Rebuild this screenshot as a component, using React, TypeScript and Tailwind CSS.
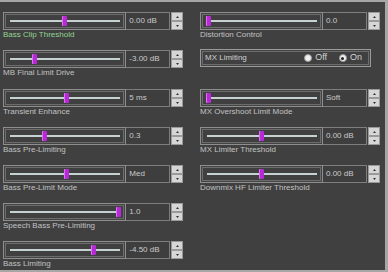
import React from 'react';

type SliderRow = { label: string; value: string; thumb: number; green?: boolean };

const left: SliderRow[] = [
  { label: 'Bass Clip Threshold', value: '0.00 dB', thumb: 58, green: true },
  { label: 'MB Final Limit Drive', value: '-3.00 dB', thumb: 28 },
  { label: 'Transient Enhance', value: '5 ms', thumb: 60 },
  { label: 'Bass Pre-Limiting', value: '0.3', thumb: 38 },
  { label: 'Bass Pre-Limit Mode', value: 'Med', thumb: 60 },
  { label: 'Speech Bass Pre-Limiting', value: '1.0', thumb: 112 },
  { label: 'Bass Limiting', value: '-4.50 dB', thumb: 87 },
];

const heights = ['h-[38px]', 'h-[39px]', 'h-[38px]', 'h-[38px]', 'h-[38px]', 'h-[38px]', 'h-[38px]'];

function Spin() {
  return (
    <div className="ml-[1px] flex h-[18px] w-[12px] flex-col">
      {[0, 1].map((i) => (
        <div
          key={i}
          className="flex h-[9px] items-center justify-center border border-[#9a9a9a] bg-[#d6d6d6]"
        >
          <svg width="3" height="2" viewBox="0 0 3 2">
            <path d={i === 0 ? 'M0 2 L1.5 0 L3 2 Z' : 'M0 0 L1.5 2 L3 0 Z'} fill="#333" />
          </svg>
        </div>
      ))}
    </div>
  );
}

function Control({ row, sliderW }: { row: SliderRow; sliderW: string }) {
  return (
    <div className="flex h-[18px]">
      <div
        className={`relative ${sliderW} h-[18px] border border-[#8e8e8e] shadow-[inset_0_0_0_1px_#454545,inset_0_0_0_2px_#6c6c6c]`}
      >
        <div className="absolute left-[6px] right-[5px] top-[7px] h-[2px] bg-[#c6d2d2]" />
        <div
          className="absolute top-[3px] h-[10px] w-[5px] rounded-[1px] bg-[#b82ad8] shadow-[inset_1px_0_0_#e070f0]"
          style={{ left: row.thumb }}
        />
      </div>
      <div className="flex h-[18px] w-[44px] items-center border border-l-0 border-[#7e7e7e] bg-[#3e3e3e] pl-[3px] text-[8px] text-[#cacaca]">
        {row.value}
      </div>
      <Spin />
    </div>
  );
}

function Row({ row, h, sliderW }: { row: SliderRow; h: string; sliderW: string }) {
  return (
    <div className={`${h} flex flex-col`}>
      <Control row={row} sliderW={sliderW} />
      <div
        className={`h-[10px] text-[8px] leading-[10px] ${row.green ? 'text-[#93d493]' : 'text-[#c2c2c2]'}`}
      >
        {row.label}
      </div>
    </div>
  );
}

function Radio({ checked, label }: { checked?: boolean; label: string }) {
  return (
    <div className="flex items-center gap-[3px]">
      <div className="flex h-[8px] w-[8px] items-center justify-center rounded-full border border-[#9a9a9a] bg-[#f0f0f0]">
        {checked && <div className="h-[3px] w-[3px] rounded-full bg-[#202020]" />}
      </div>
      <span className="text-[9px] text-[#d2d2d2]">{label}</span>
    </div>
  );
}

export default function App() {
  return (
    <div className="h-[272px] w-[388px] overflow-hidden border-t-2 border-r-[3px] border-b-2 border-[#a6a6a6] bg-[#404040] font-['Liberation_Sans',Arial,sans-serif]">
      <div className="flex pl-[3px] pt-[10px]">
        <div className="flex w-[180px] flex-col">
          {left.map((r, i) => (
            <Row key={r.label} row={r} h={heights[i]} sliderW="w-[124px]" />
          ))}
        </div>

        <div className="ml-[17px] flex w-[180px] flex-col">
          <Row
            row={{ label: 'Distortion Control', value: '0.0', thumb: 5 }}
            h="h-[37px]"
            sliderW="w-[123px]"
          />
          <div className="h-[40px]">
            <div className="flex h-[18px] w-[171px] items-center border border-[#9a9a9a] pl-[4px] pr-[8px] shadow-[inset_0_0_0_1px_#454545,inset_0_0_0_2px_#6c6c6c]">
              <span className="text-[8px] text-[#d0d0d0]">MX Limiting</span>
              <div className="ml-auto flex items-center gap-[12px]">
                <Radio label="Off" />
                <Radio label="On" checked />
              </div>
            </div>
          </div>
          <Row
            row={{ label: 'MX Overshoot Limit Mode', value: 'Soft', thumb: 5 }}
            h="h-[38px]"
            sliderW="w-[123px]"
          />
          <Row
            row={{ label: 'MX Limiter Threshold', value: '0.00 dB', thumb: 58 }}
            h="h-[38px]"
            sliderW="w-[123px]"
          />
          <Row
            row={{ label: 'Downmix HF Limiter Threshold', value: '0.00 dB', thumb: 58 }}
            h="h-[38px]"
            sliderW="w-[123px]"
          />
        </div>
      </div>
    </div>
  );
}
